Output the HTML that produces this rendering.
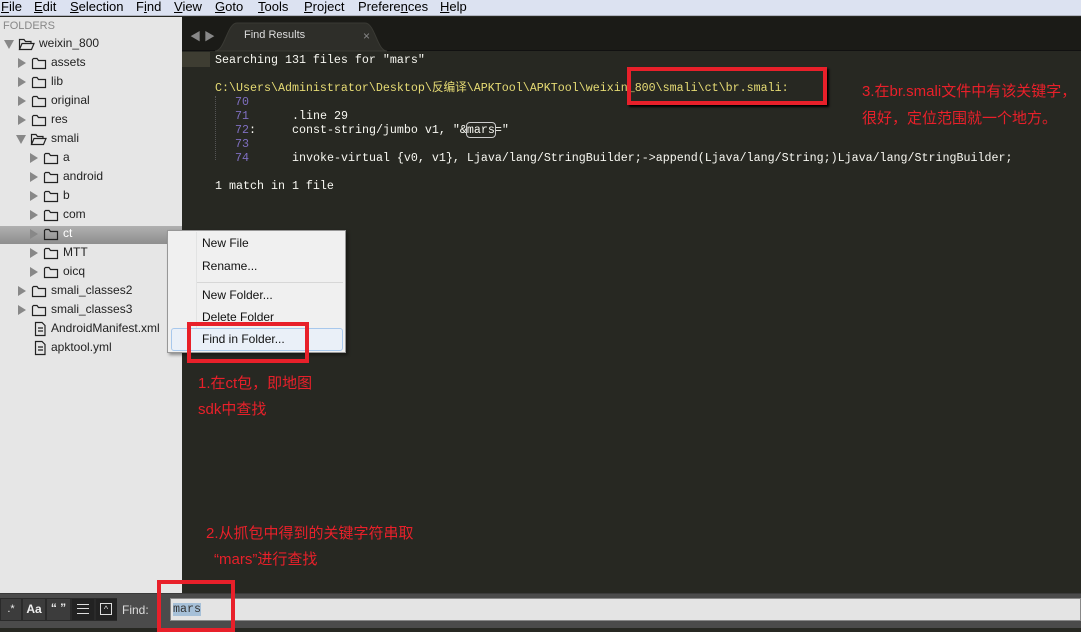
<!DOCTYPE html>
<html><head><meta charset="utf-8"><style>
*{margin:0;padding:0;box-sizing:border-box}
body{width:1081px;height:628px;overflow:hidden;position:relative;background:#272822;font-family:"Liberation Sans","Noto Sans CJK SC",sans-serif}
.a{position:absolute;white-space:nowrap}
#menu{left:0;top:0;width:1081px;height:16px;background:#dce2f1;border-bottom:1px solid #b0b4c0;font-size:13px;color:#000}
#menu span{position:absolute;top:-1px}
#side{left:0;top:17px;width:182px;height:576px;background:#e6e6e6}
.r{position:absolute;font-size:12px;color:#222;height:19px;line-height:19px}
.mono{font-family:"Liberation Mono","Noto Sans CJK SC",monospace;font-size:11.67px;line-height:14px}
.red{color:#e8202a;font-size:15px;font-family:"Liberation Sans","Noto Sans CJK SC",sans-serif}
.box{position:absolute;border:4px solid #e8202a}
</style></head><body>
<div id="menu" class="a">
<span style="left:1px"><u>F</u>ile</span><span style="left:34px"><u>E</u>dit</span><span style="left:70px"><u>S</u>election</span><span style="left:136px">F<u>i</u>nd</span><span style="left:174px"><u>V</u>iew</span><span style="left:215px"><u>G</u>oto</span><span style="left:258px"><u>T</u>ools</span><span style="left:304px"><u>P</u>roject</span><span style="left:358px">Prefere<u>n</u>ces</span><span style="left:440px"><u>H</u>elp</span>
</div>
<div id="side" class="a">
<div class="a" style="left:3px;top:3px;font-size:11px;color:#888">FOLDERS</div>
<div class="a" style="left:0;top:209px;width:182px;height:18px;background:linear-gradient(#b0b0b0,#8e8e8e)"></div>
</div>
<svg class="a" style="left:0;top:0" width="182" height="360">
<defs><g id="f"><path d="M0.5 2.5 V11.5 H13.5 V3.5 H6.5 L5 1.5 H1.5 Z" fill="none" stroke="#222" stroke-width="1.2"/></g>
<g id="o"><path d="M0.5 11.5 V1.5 H5 L6.5 3.5 H12 V5.5 M0.5 11.5 L3 5.5 H15 L12.5 11.5 Z" fill="none" stroke="#222" stroke-width="1.2"/></g>
<g id="fi"><path d="M1.5 0.5 H8 L11 3.5 V13.5 H1.5 Z M4 6h5M4 9h5" fill="none" stroke="#222" stroke-width="1.2"/></g></defs>
<path d="M4 40 L14 40 L9 49Z" fill="#888"/><use href="#o" x="19" y="38"/>
<g fill="#888">
<path d="M18 58 L26 63 L18 68Z"/><path d="M18 77 L26 82 L18 87Z"/><path d="M18 96 L26 101 L18 106Z"/><path d="M18 115 L26 120 L18 125Z"/>
<path d="M16 135 L26 135 L21 144Z"/>
<path d="M30 153 L38 158 L30 163Z"/><path d="M30 172 L38 177 L30 182Z"/><path d="M30 191 L38 196 L30 201Z"/><path d="M30 210 L38 215 L30 220Z"/><path d="M30 229 L38 234 L30 239Z"/><path d="M30 248 L38 253 L30 258Z"/><path d="M30 267 L38 272 L30 277Z"/>
<path d="M18 286 L26 291 L18 296Z"/><path d="M18 305 L26 310 L18 315Z"/></g>
<use href="#f" x="32" y="57"/><use href="#f" x="32" y="76"/><use href="#f" x="32" y="95"/><use href="#f" x="32" y="114"/><use href="#o" x="31" y="133"/>
<use href="#f" x="44" y="152"/><use href="#f" x="44" y="171"/><use href="#f" x="44" y="190"/><use href="#f" x="44" y="209"/><use href="#f" x="44" y="228"/><use href="#f" x="44" y="247"/><use href="#f" x="44" y="266"/>
<use href="#f" x="32" y="285"/><use href="#f" x="32" y="304"/><use href="#fi" x="34" y="322"/><use href="#fi" x="34" y="341"/>
</svg>
<div class="r" style="left:39px;top:34px">weixin_800</div>
<div class="r" style="left:51px;top:53px">assets</div>
<div class="r" style="left:51px;top:72px">lib</div>
<div class="r" style="left:51px;top:91px">original</div>
<div class="r" style="left:51px;top:110px">res</div>
<div class="r" style="left:51px;top:129px">smali</div>
<div class="r" style="left:63px;top:148px">a</div>
<div class="r" style="left:63px;top:167px">android</div>
<div class="r" style="left:63px;top:186px">b</div>
<div class="r" style="left:63px;top:205px">com</div>
<div class="r" style="left:63px;top:224px;color:#fff">ct</div>
<div class="r" style="left:63px;top:243px">MTT</div>
<div class="r" style="left:63px;top:262px">oicq</div>
<div class="r" style="left:51px;top:281px">smali_classes2</div>
<div class="r" style="left:51px;top:300px">smali_classes3</div>
<div class="r" style="left:51px;top:319px">AndroidManifest.xml</div>
<div class="r" style="left:51px;top:338px">apktool.yml</div>

<div class="a" style="left:182px;top:17px;width:899px;height:34px;background:#1b1b17;border-bottom:1px solid #111"></div>
<div class="a" style="left:190px;top:28px;color:#888;font-size:11px">◀ ▶</div>
<svg class="a" style="left:215px;top:20px" width="180" height="32"><path d="M0 31 C10 31 12 3 22 3 H150 C160 3 162 31 172 31 Z" fill="#2e2e29" stroke="#3a3a34"/></svg>
<div class="a" style="left:244px;top:29px;font-size:11px;color:#ddd">Find Results</div>
<div class="a" style="left:363px;top:29px;font-size:12px;color:#888">×</div>
<div class="a" style="left:182px;top:52px;width:28px;height:15px;background:#3e3d32"></div>
<div class="a mono" style="left:215px;top:53px;color:#f8f8f2">Searching 131 files for "mars"</div>
<div class="a mono" style="left:215px;top:81px;color:#e6db74">C:\Users\Administrator\Desktop\反编译\APKTool\APKTool\weixin_800\smali\ct\br.smali:</div>
<div class="a" style="left:215px;top:96px;height:64px;border-left:1px dotted #555"></div>
<div class="a mono" style="left:235px;top:95px;color:#7f6fc0">70<br>71<br>72<span style="color:#f8f8f2">:</span><br>73<br>74</div>
<div class="a mono" style="left:292px;top:109px;color:#f8f8f2">.line 29<br>const-string/jumbo v1, "&amp;<span style="outline:1px solid #ccc;border-radius:3px">mars</span>="<br><br>invoke-virtual {v0, v1}, Ljava/lang/StringBuilder;-&gt;append(Ljava/lang/String;)Ljava/lang/StringBuilder;</div>
<div class="a mono" style="left:215px;top:179px;color:#f8f8f2">1 match in 1 file</div>

<div class="a" style="left:167px;top:230px;width:179px;height:123px;background:#f0f0f0;border:1px solid #979797;box-shadow:2px 2px 3px rgba(0,0,0,.4)"></div>
<div class="a" style="left:196px;top:232px;width:1px;height:119px;background:#e2e3e3"></div>
<div class="a" style="left:197px;top:282px;width:146px;height:1px;background:#d7d7d7"></div>
<div class="a" style="left:171px;top:328px;width:172px;height:23px;background:#eaf0f8;border:1px solid #a8c8ec;border-radius:3px"></div>
<div class="a" style="left:202px;top:236px;font-size:12px;color:#111;line-height:15px">New File</div>
<div class="a" style="left:202px;top:259px;font-size:12px;color:#111">Rename...</div>
<div class="a" style="left:202px;top:288px;font-size:12px;color:#111">New Folder...</div>
<div class="a" style="left:202px;top:310px;font-size:12px;color:#111">Delete Folder</div>
<div class="a" style="left:202px;top:332px;font-size:12px;color:#111">Find in Folder...</div>

<div class="a red" style="left:198px;top:372px">1.在ct包，即地图</div>
<div class="a red" style="left:198px;top:398px">sdk中查找</div>
<div class="a red" style="left:206px;top:522px">2.从抓包中得到的关键字符串取</div>
<div class="a red" style="left:214px;top:548px">“mars”进行查找</div>
<div class="a red" style="left:862px;top:80px">3.在br.smali文件中有该关键字，</div>
<div class="a red" style="left:862px;top:107px">很好，定位范围就一个地方。</div>

<div class="a" style="left:0;top:593px;width:1081px;height:35px;background:#4b4b4b;border-top:1px solid #3a3a3a"></div>
<div class="a" style="left:0;top:598px;width:117px;height:23px;background:#2a2a2a"></div>
<div class="a" style="left:1px;top:599px;width:20px;height:21px;background:#3c3c3c;color:#eee;font-size:11px;text-align:center;line-height:20px">.*</div>
<div class="a" style="left:23px;top:599px;width:22px;height:21px;background:#3c3c3c;color:#eee;font-size:12px;font-weight:bold;text-align:center;line-height:21px">Aa</div>
<div class="a" style="left:47px;top:599px;width:23px;height:21px;background:#3c3c3c;color:#eee;font-size:12px;font-weight:bold;text-align:center;line-height:18px">“ ”</div>
<div class="a" style="left:72px;top:599px;width:22px;height:21px;background:#222"></div>
<div class="a" style="left:77px;top:604px;width:12px;height:10px;border-top:1px solid #ddd;border-bottom:1px solid #ddd"></div>
<div class="a" style="left:77px;top:608px;width:12px;height:1px;background:#ddd"></div>
<div class="a" style="left:96px;top:599px;width:21px;height:21px;background:#222"></div>
<div class="a" style="left:100px;top:603px;width:12px;height:12px;border:1px solid #ddd;color:#ddd;font-size:9px;text-align:center;line-height:10px">^</div>
<div class="a" style="left:122px;top:603px;color:#ddd;font-size:12px">Find:</div>
<div class="a" style="left:170px;top:598px;width:911px;height:23px;background:#e4e4e4;border:1px solid #888"></div>
<div class="a mono" style="left:173px;top:603px;background:#a6c0d8;color:#333;height:13px;line-height:13px">mars</div>

<div class="box" style="left:627px;top:67px;width:200px;height:38px;box-shadow:2px 2px 2px #000"></div>
<div class="box" style="left:187px;top:322px;width:122px;height:41px"></div>
<div class="box" style="left:157px;top:580px;width:78px;height:52px"></div>
</body></html>
